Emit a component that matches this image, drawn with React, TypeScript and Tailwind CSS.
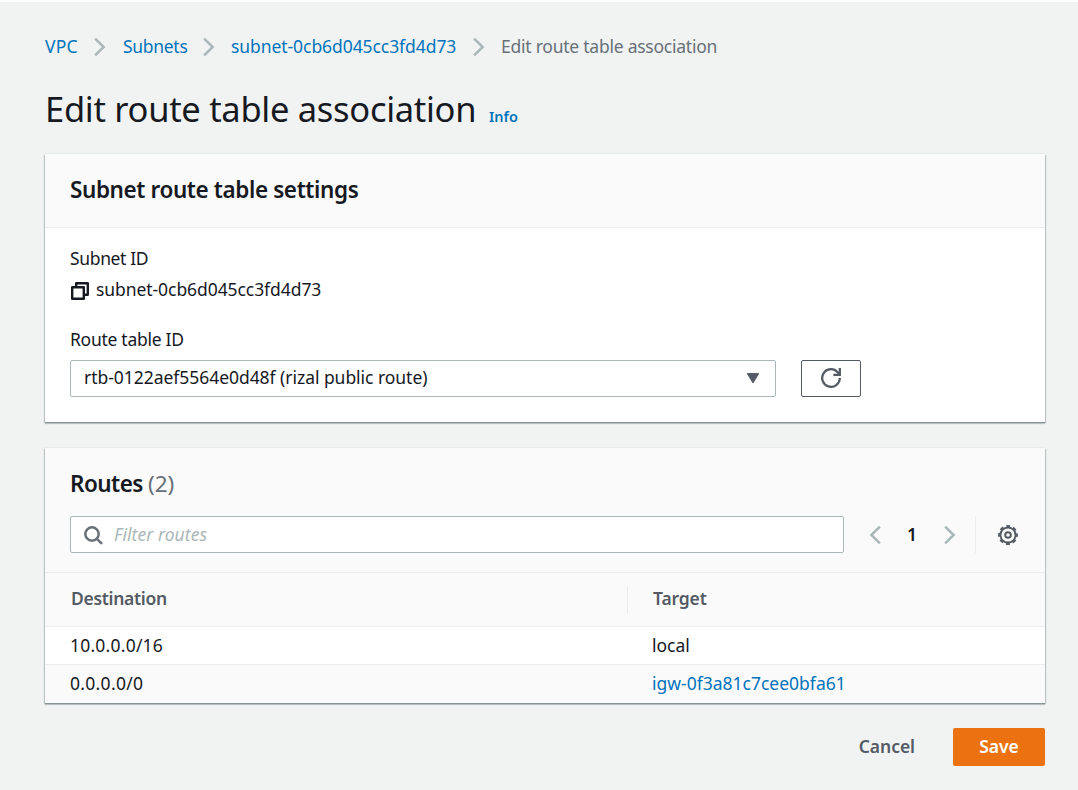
import type { ReactNode } from "react";

const cardClass =
  "bg-white shadow-[0_1px_0_0_#879596,0_2px_1px_0_rgba(0,28,36,0.18),1px_1px_1px_0_rgba(0,28,36,0.2),-1px_1px_1px_0_rgba(0,28,36,0.2),0_-1px_0_0_#e6eaea]";

function Chevron({ flip = false }: { flip?: boolean }) {
  return (
    <svg
      width="12"
      height="20"
      viewBox="0 0 12 20"
      fill="none"
      stroke="#aab7b8"
      strokeWidth="2.5"
      className={flip ? "shrink-0 rotate-180" : "shrink-0"}
    >
      <path d="M1.1 1.6 9.7 10 1.1 18.4" />
    </svg>
  );
}

function CopyIcon() {
  return (
    <svg width="18" height="18" viewBox="0 0 18 18" fill="none" stroke="#16191f" strokeWidth="2.4" strokeLinejoin="round" className="shrink-0">
      <path d="M1.2 5.2h11.6v11.6H1.2z" />
      <path d="M5.2 5V1.2h11.6v11.6H13" />
    </svg>
  );
}

function RefreshIcon() {
  return (
    <svg width="20" height="20" viewBox="0 0 20 20" fill="none" stroke="#545b64" strokeWidth="2.3" className="shrink-0">
      <path d="M18.8 10A8.8 8.8 0 1 1 16.6 4.2L18.6 6.6" />
      <path d="M18.8 0v6.9H12.4" />
    </svg>
  );
}

function SearchIcon() {
  return (
    <svg width="19" height="19" viewBox="0 0 19 19" fill="none" stroke="#687078" strokeWidth="2.5" className="shrink-0">
      <circle cx="8" cy="8" r="6.7" />
      <path d="m12.6 12.6 5.4 5.2" />
    </svg>
  );
}

function GearIcon() {
  return (
    <svg width="20" height="20" viewBox="0 0 20 20" fill="none" stroke="#545b64" className="shrink-0">
      <circle cx="10" cy="10" r="7.6" strokeWidth="2" />
      <circle cx="10" cy="10" r="8.9" strokeWidth="2" strokeDasharray="3.9 3.09" strokeDashoffset="1.95" />
      <circle cx="10" cy="10" r="2.8" strokeWidth="2" />
    </svg>
  );
}

function Crumb({ children, className }: { children: ReactNode; className: string }) {
  return (
    <a href="#" className={`pb-[2px] text-[#0073bb] ${className}`}>
      {children}
    </a>
  );
}

export default function App() {
  return (
    <div className="h-[790px] overflow-hidden border-t-2 border-white bg-[#f1f3f3] pr-[33px] pl-[45px] font-['Noto_Sans','Open_Sans',sans-serif] text-[17.5px] leading-6 whitespace-nowrap text-[#16191f]">
      <nav className="mt-[33px] flex h-6 items-center">
        <Crumb className="w-[33px] tracking-[0.15px]">VPC</Crumb>
        <span className="ml-4 flex"><Chevron /></span>
        <Crumb className="ml-[17px] w-[65px] tracking-[-0.3px]">Subnets</Crumb>
        <span className="ml-[15px] flex"><Chevron /></span>
        <Crumb className="ml-4 w-[226px] tracking-[-0.07px]">subnet-0cb6d045cc3fd4d73</Crumb>
        <span className="ml-[16px] flex"><Chevron /></span>
        <span className="ml-4 pb-[2px] tracking-[-0.24px] text-[#687078]">Edit route table association</span>
      </nav>

      <header className="mt-[26px] flex h-12 items-baseline">
        <h1 className="w-[444px] text-[34.5px] leading-[48px] tracking-[-0.29px]">Edit route table association</h1>
        <a href="#" className="text-[14.5px] font-semibold text-[#0073bb]">Info</a>
      </header>

      <section className={`mt-[21px] h-[268px] ${cardClass}`}>
        <div className="flex h-[74px] items-center border-b border-[#eaeded] bg-[#fafafa] px-[25px] pb-0.5">
          <h2 className="text-[22.5px] font-semibold tracking-[-0.4px]">Subnet route table settings</h2>
        </div>
        <div className="px-[25px] pt-[18px]">
          <div className="tracking-[-0.35px]">Subnet ID</div>
          <div className="mt-[7px] flex items-center">
            <span className="mt-[3px] ml-px flex"><CopyIcon /></span>
            <span className="ml-[7px] tracking-[-0.07px]">subnet-0cb6d045cc3fd4d73</span>
          </div>
          <div className="mt-[26px] tracking-[-0.28px]">Route table ID</div>
          <div className="mt-[9px] flex gap-[25px]">
            <button className="flex h-[37px] w-[706px] items-center justify-between rounded-[2px] border border-[#aab7b8] pr-[15px] pl-[13px]">
              <span className="pb-[3px] tracking-[-0.04px]">rtb-0122aef5564e0d48f (rizal public route)</span>
              <svg width="14" height="11" viewBox="0 0 14 11">
                <path d="M1.3.6h11.4L7 10z" fill="#545b64" stroke="#545b64" strokeLinejoin="round" />
              </svg>
            </button>
            <button aria-label="Refresh" className="flex h-[37px] w-[60px] items-center justify-center rounded-[2px] border border-[#545b64] pb-px">
              <RefreshIcon />
            </button>
          </div>
        </div>
      </section>

      <section className={`mt-[26px] h-[255px] ${cardClass}`}>
        <div className="h-[125px] border-b border-[#eaeded] bg-[#fafafa] pt-6 pl-[25px]">
          <h2 className="flex gap-1.5 text-[22.5px] font-semibold">
            <span className="w-[72px] tracking-[-0.55px]">Routes</span>
            <span className="font-normal text-[#687078]">(2)</span>
          </h2>
          <div className="mt-5 flex h-[37px] items-center">
            <div className="flex h-[37px] w-[774px] items-center rounded-[2px] border border-[#aab7b8] bg-white pb-px pl-[13px]">
              <span className="mt-[2px] flex"><SearchIcon /></span>
              <span className="ml-[11px] tracking-[0.08px] text-[#aab7b8] italic">Filter routes</span>
            </div>
            <span className="ml-[25px] flex"><Chevron flip /></span>
            <span className="ml-[26px] w-[11px] pb-0.5 font-semibold">1</span>
            <span className="ml-[26px] flex"><Chevron /></span>
            <span className="ml-[19px] h-[37px] w-px bg-[#eaeded]" />
            <span className="ml-[22px] flex"><GearIcon /></span>
          </div>
        </div>
        <div className="grid grid-cols-[583px_1fr]">
          <div className="flex h-[54px] items-center border-b border-[#eaeded] bg-[#fafafa] pl-[26px] font-semibold text-[#545b64]">
            <span className="grow pb-[3px] tracking-[-0.3px]">Destination</span>
            <span className="h-7 w-px bg-[#eaeded]" />
          </div>
          <div className="flex h-[54px] items-center border-b border-[#eaeded] bg-[#fafafa] pb-[3px] pl-[25px] font-semibold text-[#545b64]">
            <span className="tracking-[-0.15px]">Target</span>
          </div>
          <div className="flex h-[38px] items-center border-b border-[#eaeded] pb-0.5 pl-[25px] tracking-[0.22px]">10.0.0.0/16</div>
          <div className="flex h-[38px] items-center border-b border-[#eaeded] pb-0.5 pl-6">local</div>
          <div className="flex h-[38px] items-center bg-[#fafafa] pb-0.5 pl-[25px] tracking-[0.3px]">0.0.0.0/0</div>
          <div className="flex h-[38px] items-center bg-[#fafafa] pb-0.5 pl-6">
            <a href="#" className="text-[#0073bb]">igw-0f3a81c7cee0bfa61</a>
          </div>
        </div>
      </section>

      <footer className="mt-[25px] flex justify-end gap-[38px] font-semibold">
        <button className="h-[38px] pb-0.5 tracking-[-0.05px] text-[#545b64]">Cancel</button>
        <button className="h-[38px] w-[92px] rounded-[2px] bg-[#ec7211] pb-0.5 text-white">Save</button>
      </footer>
    </div>
  );
}
